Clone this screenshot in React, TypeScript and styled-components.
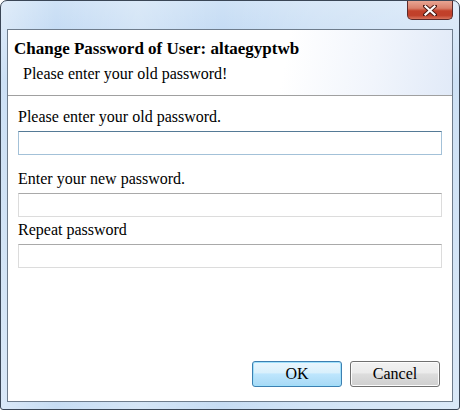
import React from 'react';
import styled, { createGlobalStyle } from 'styled-components';

const GlobalStyle = createGlobalStyle`
  html, body {
    margin: 0;
    padding: 0;
    background: #ffffff;
  }
  body {
    font-family: 'Liberation Serif', 'DejaVu Serif', serif;
  }
`;

const Window = styled.div`
  box-sizing: border-box;
  width: 460px;
  height: 410px;
  border: 1px solid #3a4656;
  border-radius: 7px 7px 3px 3px;
  background:
    linear-gradient(90deg, rgba(255, 255, 255, 0.35) 0%, rgba(255, 255, 255, 0) 12%, rgba(255, 255, 255, 0.25) 30%, rgba(255, 255, 255, 0) 48%, rgba(255, 255, 255, 0.2) 68%, rgba(255, 255, 255, 0.35) 100%),
    linear-gradient(180deg, #cfe2f6 0%, #b4d1f0 20%, #bcd6f1 60%, #c7ddf4 100%);
  padding: 0 6px 7px 6px;
  display: flex;
  flex-direction: column;
`;

const TitleBar = styled.div`
  height: 28px;
  display: flex;
  justify-content: flex-end;
  align-items: flex-start;
`;

const CloseButton = styled.button`
  box-sizing: border-box;
  width: 46px;
  height: 19px;
  margin: 0;
  padding: 0;
  border: 1px solid #5b2a2a;
  border-top: none;
  border-radius: 0 0 5px 5px;
  background: linear-gradient(180deg, #e8a593 0%, #d9806b 40%, #c2412a 55%, #c0402a 80%, #d8735c 100%);
  display: flex;
  align-items: center;
  justify-content: center;
  cursor: pointer;
`;

const Client = styled.div`
  flex: 1;
  border: 1px solid #6e7c8c;
  background: #ffffff;
  display: flex;
  flex-direction: column;
`;

const Header = styled.div`
  height: 66px;
  box-sizing: border-box;
  border-bottom: 1px solid #a0a0a0;
  background: linear-gradient(100deg, #ffffff 0%, #ffffff 62%, #f1f5fc 82%, #e1eaf8 100%);
  padding: 9px 6px 0 6px;
`;

const Title = styled.div`
  font-weight: bold;
  font-size: 17px;
  line-height: 20px;
  color: #000000;
`;

const Subtitle = styled.div`
  font-size: 16px;
  line-height: 18px;
  color: #000000;
  margin-top: 6px;
  padding-left: 9px;
`;

const Body = styled.div`
  flex: 1;
  padding: 12px 10px 0 10px;
  display: flex;
  flex-direction: column;
`;

const Field = styled.div<{ $gap: number }>`
  display: flex;
  flex-direction: column;
  margin-bottom: ${({ $gap }) => $gap}px;
`;

const Label = styled.label`
  font-size: 16px;
  line-height: 18px;
  color: #000000;
  margin-bottom: 5px;
`;

const Input = styled.input<{ $focused?: boolean }>`
  box-sizing: border-box;
  width: 100%;
  height: 24px;
  margin: 0;
  padding: 0 4px;
  font-family: inherit;
  font-size: 15px;
  background: #ffffff;
  border: 1px solid ${({ $focused }) => ($focused ? '#a3c1d8' : '#dcdcdc')};
  border-top-color: ${({ $focused }) => ($focused ? '#557a96' : '#a9a9a9')};
  outline: none;
`;

const Footer = styled.div`
  display: flex;
  justify-content: flex-end;
  gap: 8px;
  padding: 0 12px 14px 0;
`;

const Button = styled.button<{ $primary?: boolean }>`
  box-sizing: border-box;
  width: 90px;
  height: 26px;
  font-family: inherit;
  font-size: 16px;
  color: #000000;
  border-radius: 3px;
  border: 1px solid ${({ $primary }) => ($primary ? '#3c7fb1' : '#707070')};
  background: ${({ $primary }) =>
    $primary
      ? 'linear-gradient(180deg, #eaf6fd 0%, #d9f0fc 45%, #bee6fd 50%, #a7d9f5 100%)'
      : 'linear-gradient(180deg, #f2f2f2 0%, #ebebeb 45%, #dddddd 50%, #cfcfcf 100%)'};
  box-shadow: inset 0 0 0 1px ${({ $primary }) => ($primary ? '#9fe0fb' : '#fcfcfc')};
  cursor: pointer;
`;

const CloseIcon = () => (
  <svg width="14" height="11" viewBox="0 0 14 11">
    <path d="M2 1 L12 10 M12 1 L2 10" stroke="#4a1a14" strokeWidth="4" strokeLinecap="square" />
    <path d="M2.5 1.5 L11.5 9.5 M11.5 1.5 L2.5 9.5" stroke="#ffffff" strokeWidth="2.2" strokeLinecap="square" />
  </svg>
);

export default function App() {
  return (
    <>
      <GlobalStyle />
      <Window>
        <TitleBar>
          <CloseButton aria-label="Close">
            <CloseIcon />
          </CloseButton>
        </TitleBar>
        <Client>
          <Header>
            <Title>Change Password of User: altaegyptwb</Title>
            <Subtitle>Please enter your old password!</Subtitle>
          </Header>
          <Body>
            <Field $gap={15}>
              <Label>Please enter your old password.</Label>
              <Input type="password" $focused />
            </Field>
            <Field $gap={4}>
              <Label>Enter your new password.</Label>
              <Input type="password" />
            </Field>
            <Field $gap={0}>
              <Label>Repeat password</Label>
              <Input type="password" />
            </Field>
          </Body>
          <Footer>
            <Button $primary>OK</Button>
            <Button>Cancel</Button>
          </Footer>
        </Client>
      </Window>
    </>
  );
}
